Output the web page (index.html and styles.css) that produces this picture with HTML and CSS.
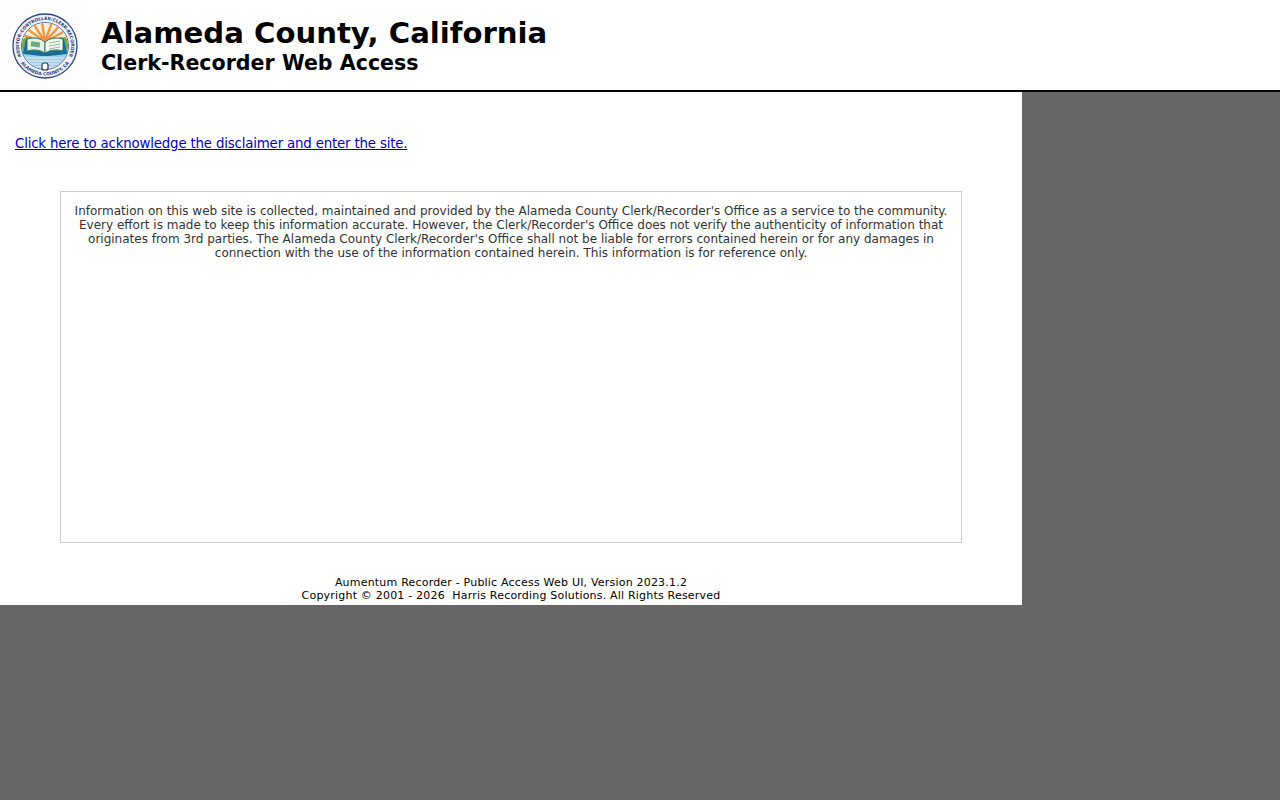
FILE: index.html
```html
<!DOCTYPE html>
<html lang="en">
<head>
<meta charset="utf-8">
<title>Alameda County, California</title>
<link rel="stylesheet" href="styles.css">
</head>
<body>
<header class="header">
  <div class="logo">
    <svg width="66" height="66" viewBox="0 0 66 66" aria-hidden="true">
      <defs>
        <path id="arcTop" d="M10.500 46A26 26 0 1 1 55.500 46"/>
        <path id="arcBottom" d="M7.450 47.750A29.500 29.500 0 0 0 58.550 47.750"/>
        <clipPath id="inner"><circle cx="33" cy="33" r="23"/></clipPath>
      </defs>
      <circle cx="33" cy="33" r="32" fill="#eef1f7" stroke="#2f4682" stroke-width="1.300"/>
      <circle cx="33" cy="33" r="23.500" fill="#fff" stroke="#2f4682" stroke-width=".8"/>
      <text class="seal-text"><textPath href="#arcTop" startOffset="50%" text-anchor="middle">AUDITOR-CONTROLLER/CLERK-RECORDER</textPath></text>
      <text class="seal-text seal-text-low"><textPath href="#arcBottom" startOffset="50%" text-anchor="middle">ALAMEDA COUNTY, CA</textPath></text>
      <g clip-path="url(#inner)">
        <rect x="9" y="9" width="48" height="24" fill="#fff1d8"/>
        <g stroke="#ef9548" stroke-width="2.400">
          <path d="M33 29 30 9M33 29 21 10M33 29 40 9M33 29 48 12M33 29 14 15M33 29 53 18M33 29 10 22M33 29 56 25"/>
        </g>
        <path d="M9 28Q16 20 24 27L28 30H38L44 26Q51 21 57 28V40H9Z" fill="#6fa84e"/>
        <rect x="9" y="41" width="48" height="16" fill="#9fcbe3"/>
        <path d="M10 45h46M12 48h42M14 51h38M18 54h30" stroke="#e8f4fa" stroke-width="1"/>
      </g>
      <path d="M11 41 14 26 16 26V38Q26 36 33 40 40 36 50 38V26L52 26 55 41 37 43H29Z" fill="#176f97"/>
      <path d="M15 26Q26 23 33 29V40Q25 35 15 38Z" fill="#e6f2df" stroke="#2b6a62" stroke-width=".9"/>
      <path d="M51 26Q40 23 33 29V40Q41 35 51 38Z" fill="#f4f7ea" stroke="#2b6a62" stroke-width=".9"/>
      <rect x="19" y="29" width="9" height="5" fill="#6aa882" transform="rotate(8 24 31)"/>
      <path d="M37 30l11-2M37 33l11-2M37 36l11-2" stroke="#7fa98f" stroke-width=".8"/>
      <rect x="30" y="50" width="6" height="7" rx="2" fill="#fff" stroke="#1f2f55" stroke-width="1.200"/>
    </svg>
  </div>
  <div class="titles">
    <h1 class="title">Alameda County, California</h1>
    <h2 class="subtitle">Clerk-Recorder Web Access</h2>
  </div>
</header>
<main class="page">
  <p class="enter"><a href="#">Click here to acknowledge the disclaimer and enter the site.</a></p>
  <section class="disclaimer">
    Information on this web site is collected, maintained and provided by the Alameda County Clerk/Recorder's Office as a service to the community. Every effort is made to keep this information accurate. However, the Clerk/Recorder's Office does not verify the authenticity of information that originates from 3rd parties. The Alameda County Clerk/Recorder's Office shall not be liable for errors contained herein or for any damages in connection with the use of the information contained herein. This information is for reference only.
  </section>
  <footer class="footer">
    Aumentum Recorder - Public Access Web UI, Version 2023.1.2<br>
    Copyright © 2001 - 2026&nbsp; Harris Recording Solutions. All Rights Reserved
  </footer>
</main>
</body>
</html>
```
FILE: styles.css
```css
html, body {
  margin: 0;
  padding: 0;
}
body {
  background: #666;
  font-family: "DejaVu Sans", sans-serif;
  color: #000;
}
.header {
  display: flex;
  align-items: flex-start;
  height: 90px;
  background: #fff;
  border-bottom: 2px solid #000;
}
.logo {
  display: flex;
  align-items: center;
  justify-content: center;
  width: 88px;
  height: 88px;
  margin: 2px 0 0;
  background: #fdfdfd;
  flex: none;
  padding-left: 2px;
  box-sizing: border-box;
}
.seal-text {
  font-family: "DejaVu Sans", sans-serif;
  font-size: 4.400px;
  font-weight: bold;
  fill: #2c4178;
}
.seal-text-low {
  font-size: 4.500px;
}
.titles {
  padding: 17px 0 0 13px;
}
.title {
  margin: 0;
  font-size: 29.150px;
  line-height: 33px;
  font-weight: bold;
}
.subtitle {
  margin: 0;
  font-size: 20.600px;
  line-height: 26px;
  font-weight: bold;
}
.page {
  width: 1022px;
  height: 513px;
  background: #fff;
  overflow: hidden;
}
.enter {
  margin: 0;
  padding: 44px 0 0 15px;
  font-size: 13.330px;
  line-height: 16px;
  letter-spacing: -0.167px;
}
.enter a {
  color: #00c;
}
.disclaimer {
  box-sizing: border-box;
  width: 902px;
  height: 352px;
  margin: 39px 0 0 60px;
  padding: 12px;
  border: 1px solid #ccc;
  font-size: 12px;
  line-height: 14px;
  text-align: center;
  color: #333;
}
.footer {
  margin-top: 33px;
  font-size: 11px;
  line-height: 13px;
  letter-spacing: 0.2px;
  text-align: center;
}
```
